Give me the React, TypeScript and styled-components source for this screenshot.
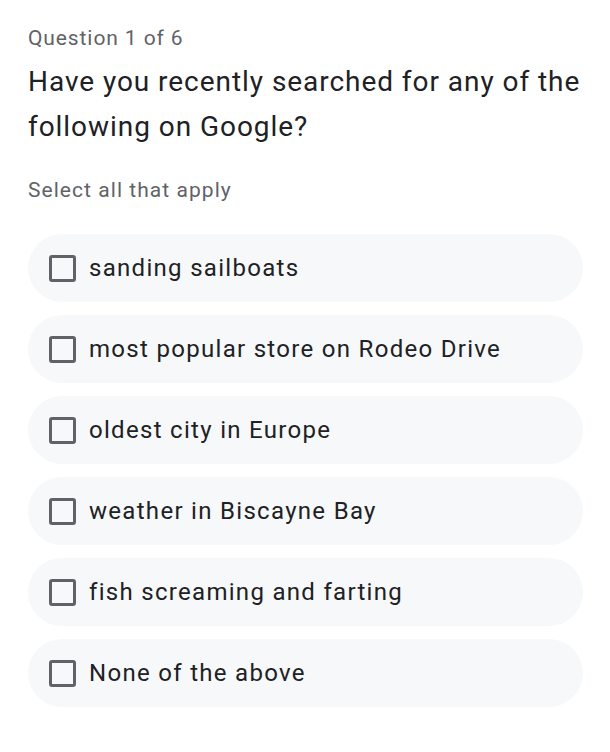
import styled, { createGlobalStyle } from "styled-components";

const GlobalStyle = createGlobalStyle`
  body {
    margin: 0;
    background: #ffffff;
    font-family: Roboto, "Noto Sans", sans-serif;
  }
`;

const Page = styled.main`
  padding: 22px 28px 0 28px;
  display: flex;
  flex-direction: column;
`;

const Counter = styled.div`
  font-size: 21px;
  line-height: 32px;
  color: #5f6368;
  letter-spacing: 0.9px;
`;

const Title = styled.h1`
  margin: 5px 0 0;
  font-size: 28px;
  font-weight: 400;
  line-height: 45px;
  color: #202124;
  letter-spacing: 0.95px;
`;

const Hint = styled.div`
  margin-top: 25px;
  font-size: 21px;
  line-height: 32px;
  color: #5f6368;
  letter-spacing: 1.05px;
`;

const OptionList = styled.div`
  margin-top: 28px;
  display: flex;
  flex-direction: column;
  gap: 13px;
  width: 555px;
`;

const Option = styled.label`
  display: flex;
  align-items: center;
  gap: 13px;
  height: 68px;
  padding: 0 21px;
  border-radius: 34px;
  background: #f7f8fa;
  cursor: pointer;
`;

const Box = styled.span<{ $checked?: boolean }>`
  width: 27px;
  height: 27px;
  box-sizing: border-box;
  border: 3px solid #5f6368;
  border-radius: 3px;
  flex-shrink: 0;
  background: ${(p) => (p.$checked ? "#1a73e8" : "transparent")};
`;

const Label = styled.span`
  font-size: 24px;
  color: #202124;
  letter-spacing: 1.3px;
`;

const OPTIONS = [
  "sanding sailboats",
  "most popular store on Rodeo Drive",
  "oldest city in Europe",
  "weather in Biscayne Bay",
  "fish screaming and farting",
  "None of the above",
];

export default function App() {
  return (
    <>
      <GlobalStyle />
      <Page>
        <Counter>Question 1 of 6</Counter>
        <Title>Have you recently searched for any of the following on Google?</Title>
        <Hint>Select all that apply</Hint>
        <OptionList>
          {OPTIONS.map((label) => (
            <Option key={label}>
              <Box />
              <Label>{label}</Label>
            </Option>
          ))}
        </OptionList>
      </Page>
    </>
  );
}
